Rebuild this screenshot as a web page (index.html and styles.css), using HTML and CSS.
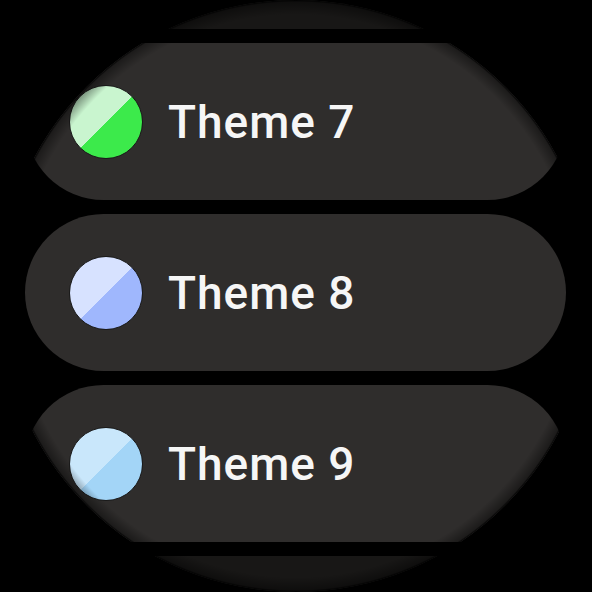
FILE: index.html
```html
<!DOCTYPE html>
<html lang="en">
<head>
    <meta charset="UTF-8">
    <meta name="viewport" content="width=device-width, initial-scale=1.0">
    <title>Themes</title>
    <link rel="stylesheet" href="styles.css">
</head>
<body>
    <div class="screen">
        <ul class="chips">
            <!-- neighbours scrolled mostly off screen -->
            <li class="chip faded"></li>
            <li class="chip">
                <span class="swatch swatch-7"></span>
                <span class="label">Theme 7</span>
            </li>
            <li class="chip">
                <span class="swatch swatch-8"></span>
                <span class="label">Theme 8</span>
            </li>
            <li class="chip">
                <span class="swatch swatch-9"></span>
                <span class="label">Theme 9</span>
            </li>
            <li class="chip faded"></li>
        </ul>
    </div>
</body>
</html>
```

FILE: styles.css
```css
body {
    margin: 0;
    background: #000;
    font-family: Roboto, "Liberation Sans", sans-serif;
}

/* round watch face */
.screen {
    position: relative;
    width: 592px;
    height: 592px;
    border-radius: 50%;
    overflow: hidden;
    background: #000;
}

/* darkens the list towards the bezel */
.screen::after {
    content: "";
    position: absolute;
    inset: 0;
    border-radius: 50%;
    background: radial-gradient(circle closest-side, rgba(0, 0, 0, 0) 95%, rgba(0, 0, 0, 0.4) 99.3%, #000 100%);
    pointer-events: none;
}

.chips {
    list-style: none;
    margin: -128px 0 0;
    padding: 0 26px 0 25px;
    display: flex;
    flex-direction: column;
    gap: 14px;
}

.chip {
    height: 157px;
    border-radius: 79px;
    background: #2f2d2c;
    display: flex;
    align-items: center;
    gap: 25px;
    padding-left: 44px;
    flex-shrink: 0;
}

.chip.faded {
    opacity: 0.5;
}

.swatch {
    width: 72px;
    height: 72px;
    border-radius: 50%;
    border: 1px solid #1a1a1a;
    flex-shrink: 0;
}

.swatch-7 { background: linear-gradient(135deg, #c9f5cf 50%, #3cea4b 50%); }
.swatch-8 { background: linear-gradient(135deg, #d7e2ff 50%, #9fb7fd 50%); }
.swatch-9 { background: linear-gradient(135deg, #c9e7fb 50%, #a3d5f7 50%); }

.label {
    color: #f6f6f6;
    font-size: 46px;
    font-weight: 500;
    letter-spacing: 1px;
}
```
